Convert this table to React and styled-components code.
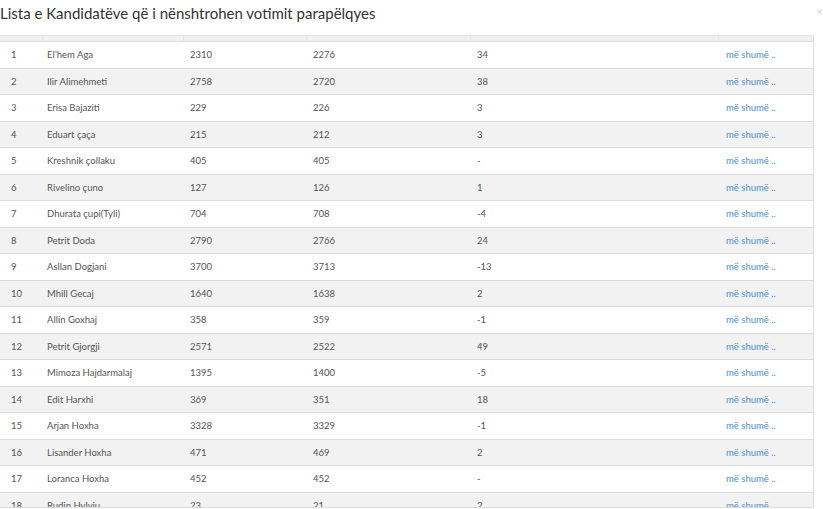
import React from 'react'
import styled, { createGlobalStyle } from 'styled-components'

const GlobalStyle = createGlobalStyle`
  html, body {
    margin: 0;
    padding: 0;
    background: #fff;
    font-family: Lato, 'Open Sans', Arial, sans-serif;
  }
`

const Page = styled.div`
  width: 823px;
  height: 509px;
  overflow: hidden;
  position: relative;
`

const Title = styled.h4`
  margin: 0;
  padding: 4px 0 0 0;
  height: 35px;
  box-sizing: border-box;
  font-size: 15px;
  font-weight: 400;
  color: #333;
`

const Close = styled.span`
  position: absolute;
  top: 6px;
  right: 1px;
  color: #ccc;
  font-size: 9px;
`

const Scroller = styled.div`
  width: 814px;
  height: 473px;
  overflow: hidden;
  border-right: 1px solid #ddd;
  border-bottom: 1px solid #ddd;
  box-sizing: border-box;
`

const Table = styled.table`
  width: 813px;
  border-collapse: collapse;
  table-layout: fixed;
  font-size: 9.5px;
  color: #555;
`

const HeadCell = styled.th`
  height: 5px;
  padding: 0;
  background: #f0f0f0;
  border-top: 1px solid #e6e6e6;
  border-left: ${p => (p.$first ? 'none' : '1px solid #e2e2e2')};
`

const Row = styled.tr`
  background: ${p => (p.$odd ? '#f2f2f2' : '#fff')};
  border-top: 1px solid #dcdcdc;
`

const Cell = styled.td`
  height: 25.5px;
  padding: 0;
  white-space: nowrap;
  overflow: hidden;
  vertical-align: middle;
  padding-left: ${p => p.$pad || 7}px;
`

const More = styled.a`
  color: #4a8fd6;
  text-decoration: none;
  font-size: 9.5px;
`

const rows = [
  ['El\u2019hem Aga', 2310, 2276, '34'],
  ['Ilir Alimehmeti', 2758, 2720, '38'],
  ['Erisa Bajaziti', 229, 226, '3'],
  ['Eduart çaça', 215, 212, '3'],
  ['Kreshnik çollaku', 405, 405, '-'],
  ['Rivelino çuno', 127, 126, '1'],
  ['Dhurata çupi(Tyli)', 704, 708, '-4'],
  ['Petrit Doda', 2790, 2766, '24'],
  ['Asllan Dogjani', 3700, 3713, '-13'],
  ['Mhill Gecaj', 1640, 1638, '2'],
  ['Allin Goxhaj', 358, 359, '-1'],
  ['Petrit Gjorgji', 2571, 2522, '49'],
  ['Mimoza Hajdarmalaj', 1395, 1400, '-5'],
  ['Edit Harxhi', 369, 351, '18'],
  ['Arjan Hoxha', 3328, 3329, '-1'],
  ['Lisander Hoxha', 471, 469, '2'],
  ['Loranca Hoxha', 452, 452, '-'],
  ['Rudin Hylviu', 23, 21, '2']
]

const widths = [42, 141, 123, 164, 248, 95]

export default function App() {
  return (
    <Page>
      <GlobalStyle />
      <Title>Lista e Kandidatëve që i nënshtrohen votimit parapëlqyes</Title>
      <Close>×</Close>
      <Scroller>
        <Table>
          <colgroup>
            {widths.map((w, i) => (
              <col key={i} style={{ width: w }} />
            ))}
          </colgroup>
          <thead>
            <tr>
              {widths.map((w, i) => (
                <HeadCell key={i} $first={i === 0} />
              ))}
            </tr>
          </thead>
          <tbody>
            {rows.map((r, i) => (
              <Row key={i} $odd={i % 2 === 1}>
                <Cell $pad={11}>{i + 1}</Cell>
                <Cell $pad={5}>{r[0]}</Cell>
                <Cell>{r[1]}</Cell>
                <Cell>{r[2]}</Cell>
                <Cell>{r[3]}</Cell>
                <Cell $pad={8}>
                  <More href="#">më shumë ..</More>
                </Cell>
              </Row>
            ))}
          </tbody>
        </Table>
      </Scroller>
    </Page>
  )
}
